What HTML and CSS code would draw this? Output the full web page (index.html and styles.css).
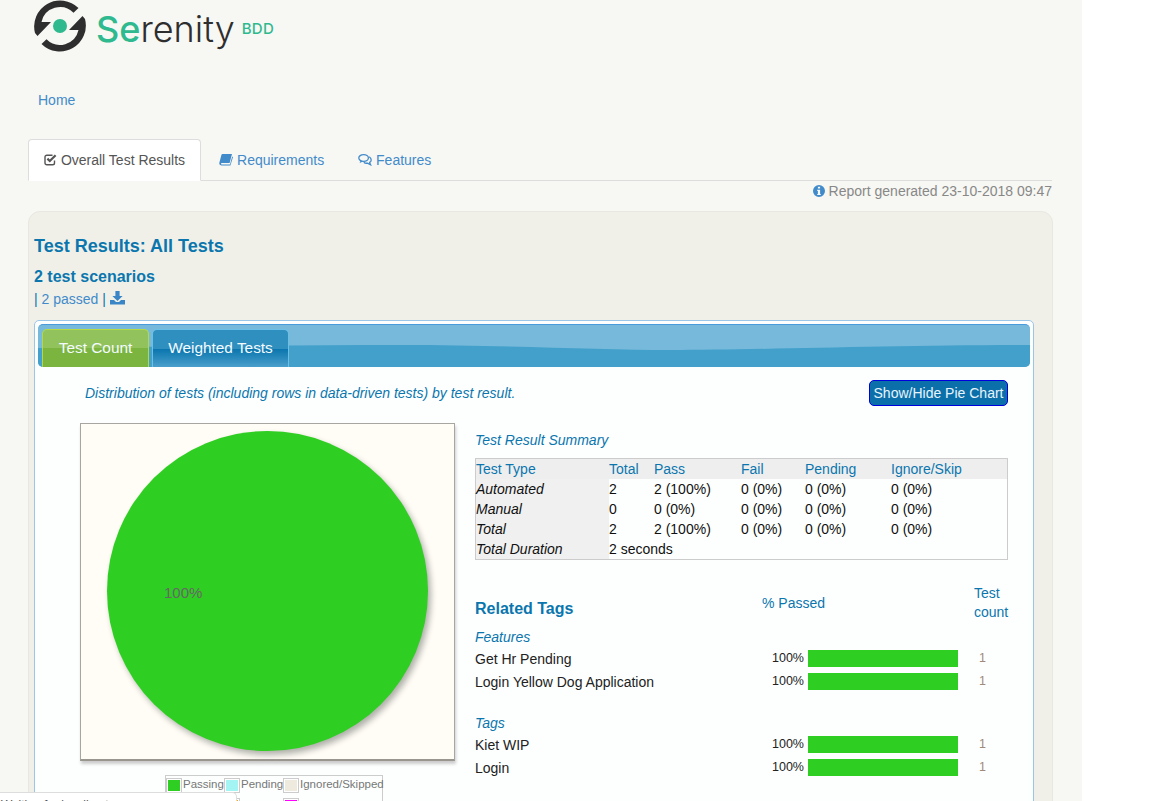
FILE: index.html
```html
<!DOCTYPE html>
<html lang="en">
  <head>
    <meta charset="UTF-8" />
    <meta name="viewport" content="width=device-width, initial-scale=1.0" />
    <title>Serenity Reports</title>
    <link rel="stylesheet" href="styles.css">
  </head>
  <body>
    <div class="page">
      <div class="logo">
        <svg class="logo-mark" width="52" height="52" viewBox="0 0 52 52">
          <path d="M1 33 A26 26 0 0 1 44.5 8 L39.5 12.7 A19 19 0 0 0 7.5 22 H17 L3.5 36 Z" fill="#2e2e2e" />
          <path d="M51 19 A26 26 0 0 1 7.5 44 L12.5 39.3 A19 19 0 0 0 44.5 30 H35 L48.5 16 Z" fill="#2e2e2e" />
          <circle cx="26" cy="26" r="7" fill="#2fb98f" />
        </svg>
        <span class="logo-name"><span class="logo-se">Se</span>renity</span>
        <span class="logo-bdd">BDD</span>
      </div>

      <div class="home"><a href="#">Home</a></div>

      <ul class="nav-tabs">
        <li class="active">
          <a href="#">
            <svg class="icon" width="13" height="13" viewBox="0 0 13 13">
              <path d="M10.5 7.5 V10 A1.8 1.8 0 0 1 8.7 11.8 H2.8 A1.8 1.8 0 0 1 1 10 V4 A1.8 1.8 0 0 1 2.8 2.2 H8.5" fill="none" stroke="#555" stroke-width="1.4" />
              <path d="M3.4 5.6 L5.8 8 L11.6 2.2" fill="none" stroke="#555" stroke-width="2.2" />
            </svg>
            Overall Test Results
          </a>
        </li>
        <li>
          <a href="#">
            <svg class="icon" width="14" height="13" viewBox="0 0 14 13">
              <path d="M3.4 1 H13 L10.6 10 H2.8 C1.7 10 1.7 11.4 2.8 11.4 H11 L13.2 3.4 L14 4 L11.4 12.4 H2.4 C0.6 12.4 0 11 0.4 9.6 L2.4 2 C2.6 1.4 3 1 3.4 1 Z" fill="#428bca" />
            </svg>
            Requirements
          </a>
        </li>
        <li>
          <a href="#">
            <svg class="icon" width="14" height="13" viewBox="0 0 14 13">
              <ellipse cx="5.6" cy="5" rx="4.8" ry="3.4" fill="none" stroke="#428bca" stroke-width="1.3" />
              <path d="M2.6 7.5 L1.6 10 L5 8.4" fill="#428bca" />
              <path d="M11.2 3.8 C14 5.6 13.6 8.4 11.6 9.4 L12.6 11.8 L9.4 10.2 C7.8 10.4 6.6 10 5.8 9.2" fill="none" stroke="#428bca" stroke-width="1.3" />
            </svg>
            Features
          </a>
        </li>
      </ul>

      <div class="report-date">
        <svg class="icon" width="12" height="12" viewBox="0 0 12 12">
          <path fill-rule="evenodd" d="M6 0 A6 6 0 1 1 6 12 A6 6 0 1 1 6 0 Z M4.9 1.8 V3.6 H7.1 V1.8 Z M4.2 4.7 V5.9 H4.9 V8.9 H4.2 V10 H7.8 V8.9 H7.1 V4.7 Z" fill="#428bca" />
        </svg>
        Report generated 23-10-2018 09:47
      </div>

      <div class="panel">
        <h2>Test Results: All Tests</h2>
        <h3>2 test scenarios</h3>
        <div class="scenario-links">
          <span class="sep">|</span> <a href="#">2 passed</a> <span class="sep">|</span>
          <a href="#">
            <svg class="icon" width="15" height="14" viewBox="0 0 15 14">
              <path d="M5.4 0 H9.6 V5 H12.6 L7.5 10 L2.4 5 H5.4 Z" fill="#3a85c6" />
              <path d="M0 9 H4 L6 11 H9 L11 9 H15 V13.4 H0 Z" fill="#3a85c6" />
            </svg>
          </a>
        </div>

        <div class="inner-panel">
          <div class="tab-header">
            <svg class="wave" viewBox="0 0 992 43" preserveAspectRatio="none">
              <path d="M0 23 C130 22 250 20 362 20 C470 20 560 25 632 25 C720 25 850 20 992 20 V43 H0 Z" fill="#42a0cb" />
            </svg>
            <a class="ui-tab ui-tab-green" href="#">Test Count</a>
            <a class="ui-tab ui-tab-blue" href="#">Weighted Tests</a>
          </div>

          <div class="desc-row">
            <span class="desc">Distribution of tests (including rows in data-driven tests) by test result.</span>
            <button type="button" class="pie-toggle">Show/Hide Pie Chart</button>
          </div>

          <div class="columns">
            <div class="chart-col">
              <div class="chart">
                <div class="pie"></div>
                <span class="pie-label">100%</span>
              </div>
              <table class="legend">
                <tr>
                  <td class="swatch"><i class="c-pass"></i></td>
                  <td class="lab-1">Passing</td>
                  <td class="swatch"><i class="c-pending"></i></td>
                  <td class="lab-2">Pending</td>
                  <td class="swatch"><i class="c-ignored"></i></td>
                  <td>Ignored/Skipped</td>
                </tr>
                <tr>
                  <td class="swatch"><i class="c-fail"></i></td>
                  <td></td>
                  <td class="swatch"><i class="c-error"></i></td>
                  <td></td>
                  <td class="swatch"><i class="c-comp"></i></td>
                  <td></td>
                </tr>
              </table>
            </div>

            <div class="summary-col">
              <div class="summary-title">Test Result Summary</div>
              <table class="summary">
                <tr>
                  <th class="c1">Test Type</th>
                  <th class="c2">Total</th>
                  <th class="c3">Pass</th>
                  <th class="c4">Fail</th>
                  <th class="c5">Pending</th>
                  <th>Ignore/Skip</th>
                </tr>
                <tr>
                  <td class="row-name">Automated</td>
                  <td>2</td>
                  <td>2 (100%)</td>
                  <td>0 (0%)</td>
                  <td>0 (0%)</td>
                  <td>0 (0%)</td>
                </tr>
                <tr>
                  <td class="row-name">Manual</td>
                  <td>0</td>
                  <td>0 (0%)</td>
                  <td>0 (0%)</td>
                  <td>0 (0%)</td>
                  <td>0 (0%)</td>
                </tr>
                <tr>
                  <td class="row-name">Total</td>
                  <td>2</td>
                  <td>2 (100%)</td>
                  <td>0 (0%)</td>
                  <td>0 (0%)</td>
                  <td>0 (0%)</td>
                </tr>
                <tr>
                  <td class="row-name">Total Duration</td>
                  <td colspan="5">2 seconds</td>
                </tr>
              </table>

              <div class="tags-head">
                <span class="tags-title">Related Tags</span>
                <span class="tags-passed">% Passed</span>
                <span class="tags-count">Test count</span>
              </div>

              <div class="tag-group first">Features</div>
              <div class="tag-row">
                <span class="tag-name">Get Hr Pending</span>
                <span class="tag-pct">100%</span>
                <span class="tag-bar"></span>
                <span class="tag-num">1</span>
              </div>
              <div class="tag-row">
                <span class="tag-name">Login Yellow Dog Application</span>
                <span class="tag-pct">100%</span>
                <span class="tag-bar"></span>
                <span class="tag-num">1</span>
              </div>

              <div class="tag-group">Tags</div>
              <div class="tag-row">
                <span class="tag-name">Kiet WIP</span>
                <span class="tag-pct">100%</span>
                <span class="tag-bar"></span>
                <span class="tag-num">1</span>
              </div>
              <div class="tag-row">
                <span class="tag-name">Login</span>
                <span class="tag-pct">100%</span>
                <span class="tag-bar"></span>
                <span class="tag-num">1</span>
              </div>
            </div>
          </div>
        </div>
      </div>
    </div>

    <div class="status-bubble">Waiting for localhost...</div>
  </body>
</html>
```

FILE: styles.css
```css
html,
body {
  height: 100vh;
  overflow: hidden;
}

body {
  font-family: "Liberation Sans", Arial, sans-serif;
  font-size: 14px;
  line-height: 20px;
  margin: 0;
  background-color: #fff;
  color: #333;
}

a {
  color: #428bca;
  text-decoration: none;
}

.page {
  width: 1082px;
  height: 100vh;
  overflow: hidden;
  background-color: #f7f7f3;
}

.icon {
  vertical-align: -1px;
}

/* logo */
.logo {
  display: flex;
  height: 52px;
  padding-left: 34px;
}

.logo-mark {
  flex: none;
}

.logo-name {
  margin-left: 10px;
  font-family: Inter, "Liberation Sans", sans-serif;
  font-size: 36px;
  font-weight: 300;
  line-height: 59px;
  color: #2e2e2e;
}

.logo-se {
  font-weight: 500;
  color: #2fb98f;
}

.logo-bdd {
  margin-left: 7px;
  font-family: Inter, "Liberation Sans", sans-serif;
  font-size: 15px;
  font-weight: 500;
  letter-spacing: 0.3px;
  line-height: 58px;
  color: #2fb98f;
}

.home {
  padding: 38px 0 0 38px;
  height: 49px;
}

/* top nav */
.nav-tabs {
  display: flex;
  list-style: none;
  width: 1024px;
  height: 42px;
  margin: 0 0 0 28px;
  padding: 0;
  box-sizing: border-box;
  border-bottom: 1px solid #ddd;
}

.nav-tabs li a {
  display: block;
  height: 42px;
  box-sizing: border-box;
  padding: 10px 15px;
  margin-right: 2px;
  border: 1px solid transparent;
  border-radius: 4px 4px 0 0;
}

.nav-tabs li.active a {
  color: #555;
  background-color: #fff;
  border-color: #ddd #ddd #fff;
}

.report-date {
  width: 1024px;
  margin-left: 28px;
  text-align: right;
  color: #888;
}

/* results panel */
.panel {
  width: 1025px;
  height: 700px;
  margin: 10px 0 0 28px;
  padding: 24px 5px 0;
  box-sizing: border-box;
  background-color: #f0f0e8;
  border: 1px solid #e8e8e0;
  border-radius: 12px;
}

.panel h2 {
  margin: 0;
  font-size: 18px;
  line-height: 20px;
  color: #0b76ae;
}

.panel h3 {
  margin: 11px 0 0;
  font-size: 16px;
  line-height: 20px;
  color: #0b76ae;
}

.scenario-links {
  margin-top: 2px;
}

.sep {
  color: #0b76ae;
}

.inner-panel {
  width: 1000px;
  height: 600px;
  margin-top: 11px;
  padding: 3px 3px 0;
  box-sizing: border-box;
  background-color: #fdfffe;
  border: 1px solid #9cc6e8;
  border-radius: 5px;
}

.tab-header {
  position: relative;
  display: flex;
  gap: 3px;
  width: 992px;
  height: 43px;
  padding: 4px 0 0 4px;
  box-sizing: border-box;
  background-color: #77b9da;
  border-top: 1px solid #4a9bdc;
  border-radius: 5px;
  overflow: hidden;
}

.wave {
  position: absolute;
  left: 0;
  top: 0;
  width: 992px;
  height: 43px;
}

.ui-tab {
  position: relative;
  height: 38px;
  box-sizing: border-box;
  border: 1px solid;
  border-bottom: none;
  border-radius: 5px 5px 0 0;
  font-size: 15.4px;
  line-height: 36px;
  text-align: center;
  color: #f4fbff;
}

.ui-tab-green {
  width: 107px;
  border-color: #b5d848;
  background: linear-gradient(#92c25c 50%, #7bb53f 50%);
}

.ui-tab-blue {
  width: 137px;
  border-color: #6cc0e8;
  background: linear-gradient(#2f8fbf 50%, #0b76ae 52%, #4a9fcb);
}

.desc-row {
  display: flex;
  justify-content: space-between;
  align-items: center;
  width: 923px;
  height: 26px;
  margin: 13px 0 0 47px;
}

.desc {
  font-style: italic;
  color: #0b76ae;
}

.pie-toggle {
  width: 139px;
  height: 26px;
  padding: 0;
  font-family: "Liberation Sans", Arial, sans-serif;
  font-size: 14px;
  color: #e8f4fb;
  background-color: #0b70aa;
  border: 1px solid #0000dd;
  border-radius: 5px;
  cursor: pointer;
}

.columns {
  display: flex;
  margin: 17px 0 0 42px;
}

/* pie chart */
.chart-col {
  width: 375px;
  flex: none;
}

.chart {
  position: relative;
  display: flex;
  justify-content: center;
  width: 375px;
  height: 338px;
  padding-top: 7px;
  box-sizing: border-box;
  background-color: #fffdf6;
  border: 1px solid #a8a6a0;
  border-bottom: 2px solid #999690;
  box-shadow: 1px 3px 3px #ccc;
}

.pie {
  width: 321px;
  height: 320px;
  border-radius: 50%;
  background-color: #2fce23;
  box-shadow: 3px 4px 6px #b0b0aa;
}

.pie-label {
  position: absolute;
  left: 83px;
  top: 159px;
  font-size: 15px;
  color: #666;
}

.legend {
  width: 218px;
  margin: 14px 0 0 85px;
  table-layout: fixed;
  border-collapse: collapse;
  border: 1px solid #ccc;
  font-size: 11.5px;
  line-height: 16px;
  color: #777;
}

.legend tr {
  height: 20px;
}

.legend td {
  padding: 0;
  vertical-align: top;
  white-space: nowrap;
}

.legend .swatch {
  width: 17px;
  padding-top: 3px;
}

.legend .lab-1 {
  width: 41px;
}

.legend .lab-2 {
  width: 42px;
}

.legend i {
  display: block;
  width: 12px;
  height: 11px;
  border: 1px solid #fff;
  outline: 1px solid #ccc;
  margin-left: 1px;
}

.c-pass { background-color: #2fce23; }
.c-pending { background-color: #a4f4f4; }
.c-ignored { background-color: #eeeade; }
.c-fail { background-color: #f8001f; }
.c-error { background-color: #ffa500; }
.c-comp { background-color: #ff00ff; }

/* summary table */
.summary-col {
  width: 533px;
  margin-left: 20px;
  flex: none;
}

.summary-title {
  margin-top: 7px;
  font-style: italic;
  color: #0b76ae;
}

.summary {
  width: 533px;
  margin-top: 8px;
  table-layout: fixed;
  border-collapse: collapse;
  border: 1px solid #ccc;
}

.summary th {
  padding: 0;
  font-weight: normal;
  text-align: left;
  color: #0b76ae;
  background-color: #eee;
}

.summary td {
  padding: 0;
  color: #111;
}

.summary .c1 { width: 133px; }
.summary .c2 { width: 45px; }
.summary .c3 { width: 87px; }
.summary .c4 { width: 64px; }
.summary .c5 { width: 86px; }

.summary .row-name {
  font-style: italic;
  background-color: #f0f0f0;
}

/* related tags */
.tags-head {
  display: flex;
  align-items: center;
  height: 40px;
  margin-top: 23px;
}

.tags-title {
  width: 287px;
  padding-top: 12px;
  font-size: 16px;
  font-weight: bold;
  color: #0b76ae;
}

.tags-passed {
  width: 212px;
  color: #0b76ae;
}

.tags-count {
  width: 34px;
  line-height: 19px;
  color: #0b76ae;
}

.tag-group {
  margin-top: 20px;
  font-style: italic;
  color: #0b76ae;
}

.tag-group.first {
  margin-top: 4px;
}

.tag-row {
  display: flex;
  align-items: center;
  height: 23px;
}

.tag-name {
  width: 287px;
  color: #222;
}

.tag-pct {
  width: 42px;
  margin: -2px 4px 0 0;
  font-size: 12.5px;
  text-align: right;
  color: #222;
}

.tag-bar {
  width: 150px;
  height: 17px;
  background-color: #2fce23;
}

.tag-num {
  margin: -2px 0 0 21px;
  font-size: 12.5px;
  color: #a08a7a;
}

.status-bubble {
  position: fixed;
  left: 0;
  bottom: -9px;
  width: 237px;
  height: 18px;
  padding-left: 1px;
  box-sizing: border-box;
  overflow: hidden;
  font-size: 12px;
  line-height: 25px;
  color: #555;
  background-color: #fff;
  border-top: 1px solid #ddd;
  border-right: 1px solid #ddd;
  border-radius: 0 5px 0 0;
}
```
